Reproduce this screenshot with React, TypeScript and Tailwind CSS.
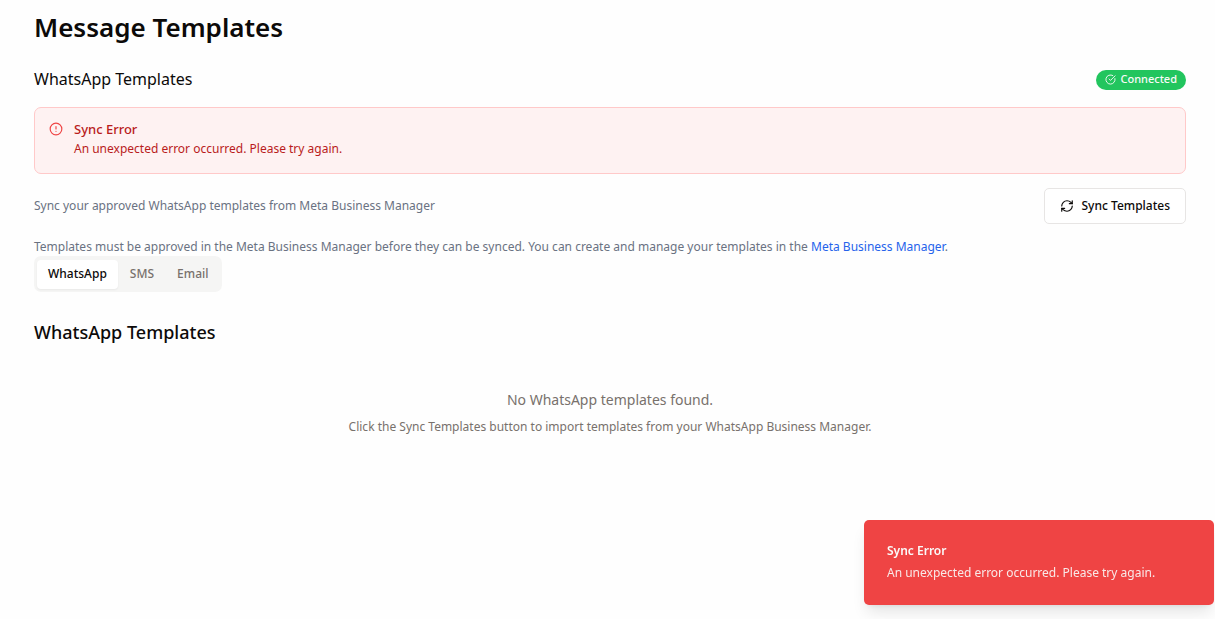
import { useState } from "react";
import { CircleAlert, CircleCheckBig, RefreshCw } from "lucide-react";

const tabs = ["WhatsApp", "SMS", "Email"];

function ConnectionBadge() {
  return (
    <span className="mt-px flex h-5 items-center gap-1 rounded-full bg-[#22c55e] px-[9px] pb-px text-[11px] font-medium text-[#fafaf9]">
      <CircleCheckBig className="size-[11px]" aria-hidden="true" />
      Connected
    </span>
  );
}

function ErrorAlert() {
  return (
    <div role="alert" className="mt-4 flex h-[67px] gap-[11px] rounded-[7px] border border-[#ffc9c9] bg-[#fef2f2] px-3.5 pt-3">
      <CircleAlert className="mt-0.5 size-3.5 shrink-0 text-[#ef4444]" aria-hidden="true" />
      <div>
        <h3 className="text-[13px] leading-[18px] font-medium text-[#b91c1c]">Sync Error</h3>
        <p className="text-[12px] leading-[22px] text-[#b91c1c]">An unexpected error occurred. Please try again.</p>
      </div>
    </div>
  );
}

function Toast() {
  return (
    <div role="status" className="fixed right-px bottom-3.5 h-[85px] w-[350px] max-w-full rounded-[5px] bg-[#ef4444] px-[23px] pt-[22px] text-[12px] text-[#fafaf9] shadow-lg">
      <div className="leading-[18px] font-semibold">Sync Error</div>
      <div className="mt-1 leading-[18px] opacity-90">An unexpected error occurred. Please try again.</div>
    </div>
  );
}

export default function App() {
  const [active, setActive] = useState("WhatsApp");
  return (
    <div className="min-h-screen bg-[#fefefe] font-['Noto_Sans',sans-serif] text-[#0c0a09]">
      <main className="pt-[9px] pr-[29px] pl-[34px]">
        <h1 className="text-[26px] leading-9 font-semibold">Message Templates</h1>
        <div className="mt-[22px] flex items-center justify-between">
          <h2 className="text-[16px] leading-6">WhatsApp Templates</h2>
          <ConnectionBadge />
        </div>
        <ErrorAlert />
        <div className="mt-3.5 flex items-center justify-between">
          <p className="text-[12px] leading-[18px] text-gray-500">Sync your approved WhatsApp templates from Meta Business Manager</p>
          <button type="button" className="flex h-9 items-center gap-2 rounded-[5px] border border-[#e7e5e4] bg-white px-[15px] text-[12px] font-medium">
            <RefreshCw className="size-3.5" aria-hidden="true" />
            Sync Templates
          </button>
        </div>
        <p className="mt-3.5 text-[12px] leading-[18px] text-gray-500">
          Templates must be approved in the Meta Business Manager before they can be synced. You can create and manage your templates in the{" "}
          <a href="#manager" className="text-[#2563eb]">Meta Business Manager</a>.
        </p>
        <div role="tablist" className="inline-flex h-9 items-center gap-px rounded-[7px] bg-[#f5f5f4] px-[3px]">
          {tabs.map((tab) => (
            <button
              key={tab}
              type="button"
              role="tab"
              aria-selected={tab === active}
              onClick={() => setActive(tab)}
              className={
                tab === active
                  ? "h-[29px] rounded-[4px] bg-white px-[11px] text-[12px] font-medium text-[#0c0a09] shadow-xs"
                  : "h-[29px] rounded-[4px] px-[11px] text-[12px] font-medium text-[#78716c]"
              }
            >
              {tab}
            </button>
          ))}
        </div>
        <section>
          <h2 className="mt-[27px] text-[18px] leading-[26px] font-medium">WhatsApp Templates</h2>
          <div className="mt-[41px] text-center text-[#78716c]">
            <p className="text-[14px] leading-7">No WhatsApp templates found.</p>
            <p className="text-[12px] leading-[26px]">Click the Sync Templates button to import templates from your WhatsApp Business Manager.</p>
          </div>
        </section>
      </main>
      <Toast />
    </div>
  );
}
